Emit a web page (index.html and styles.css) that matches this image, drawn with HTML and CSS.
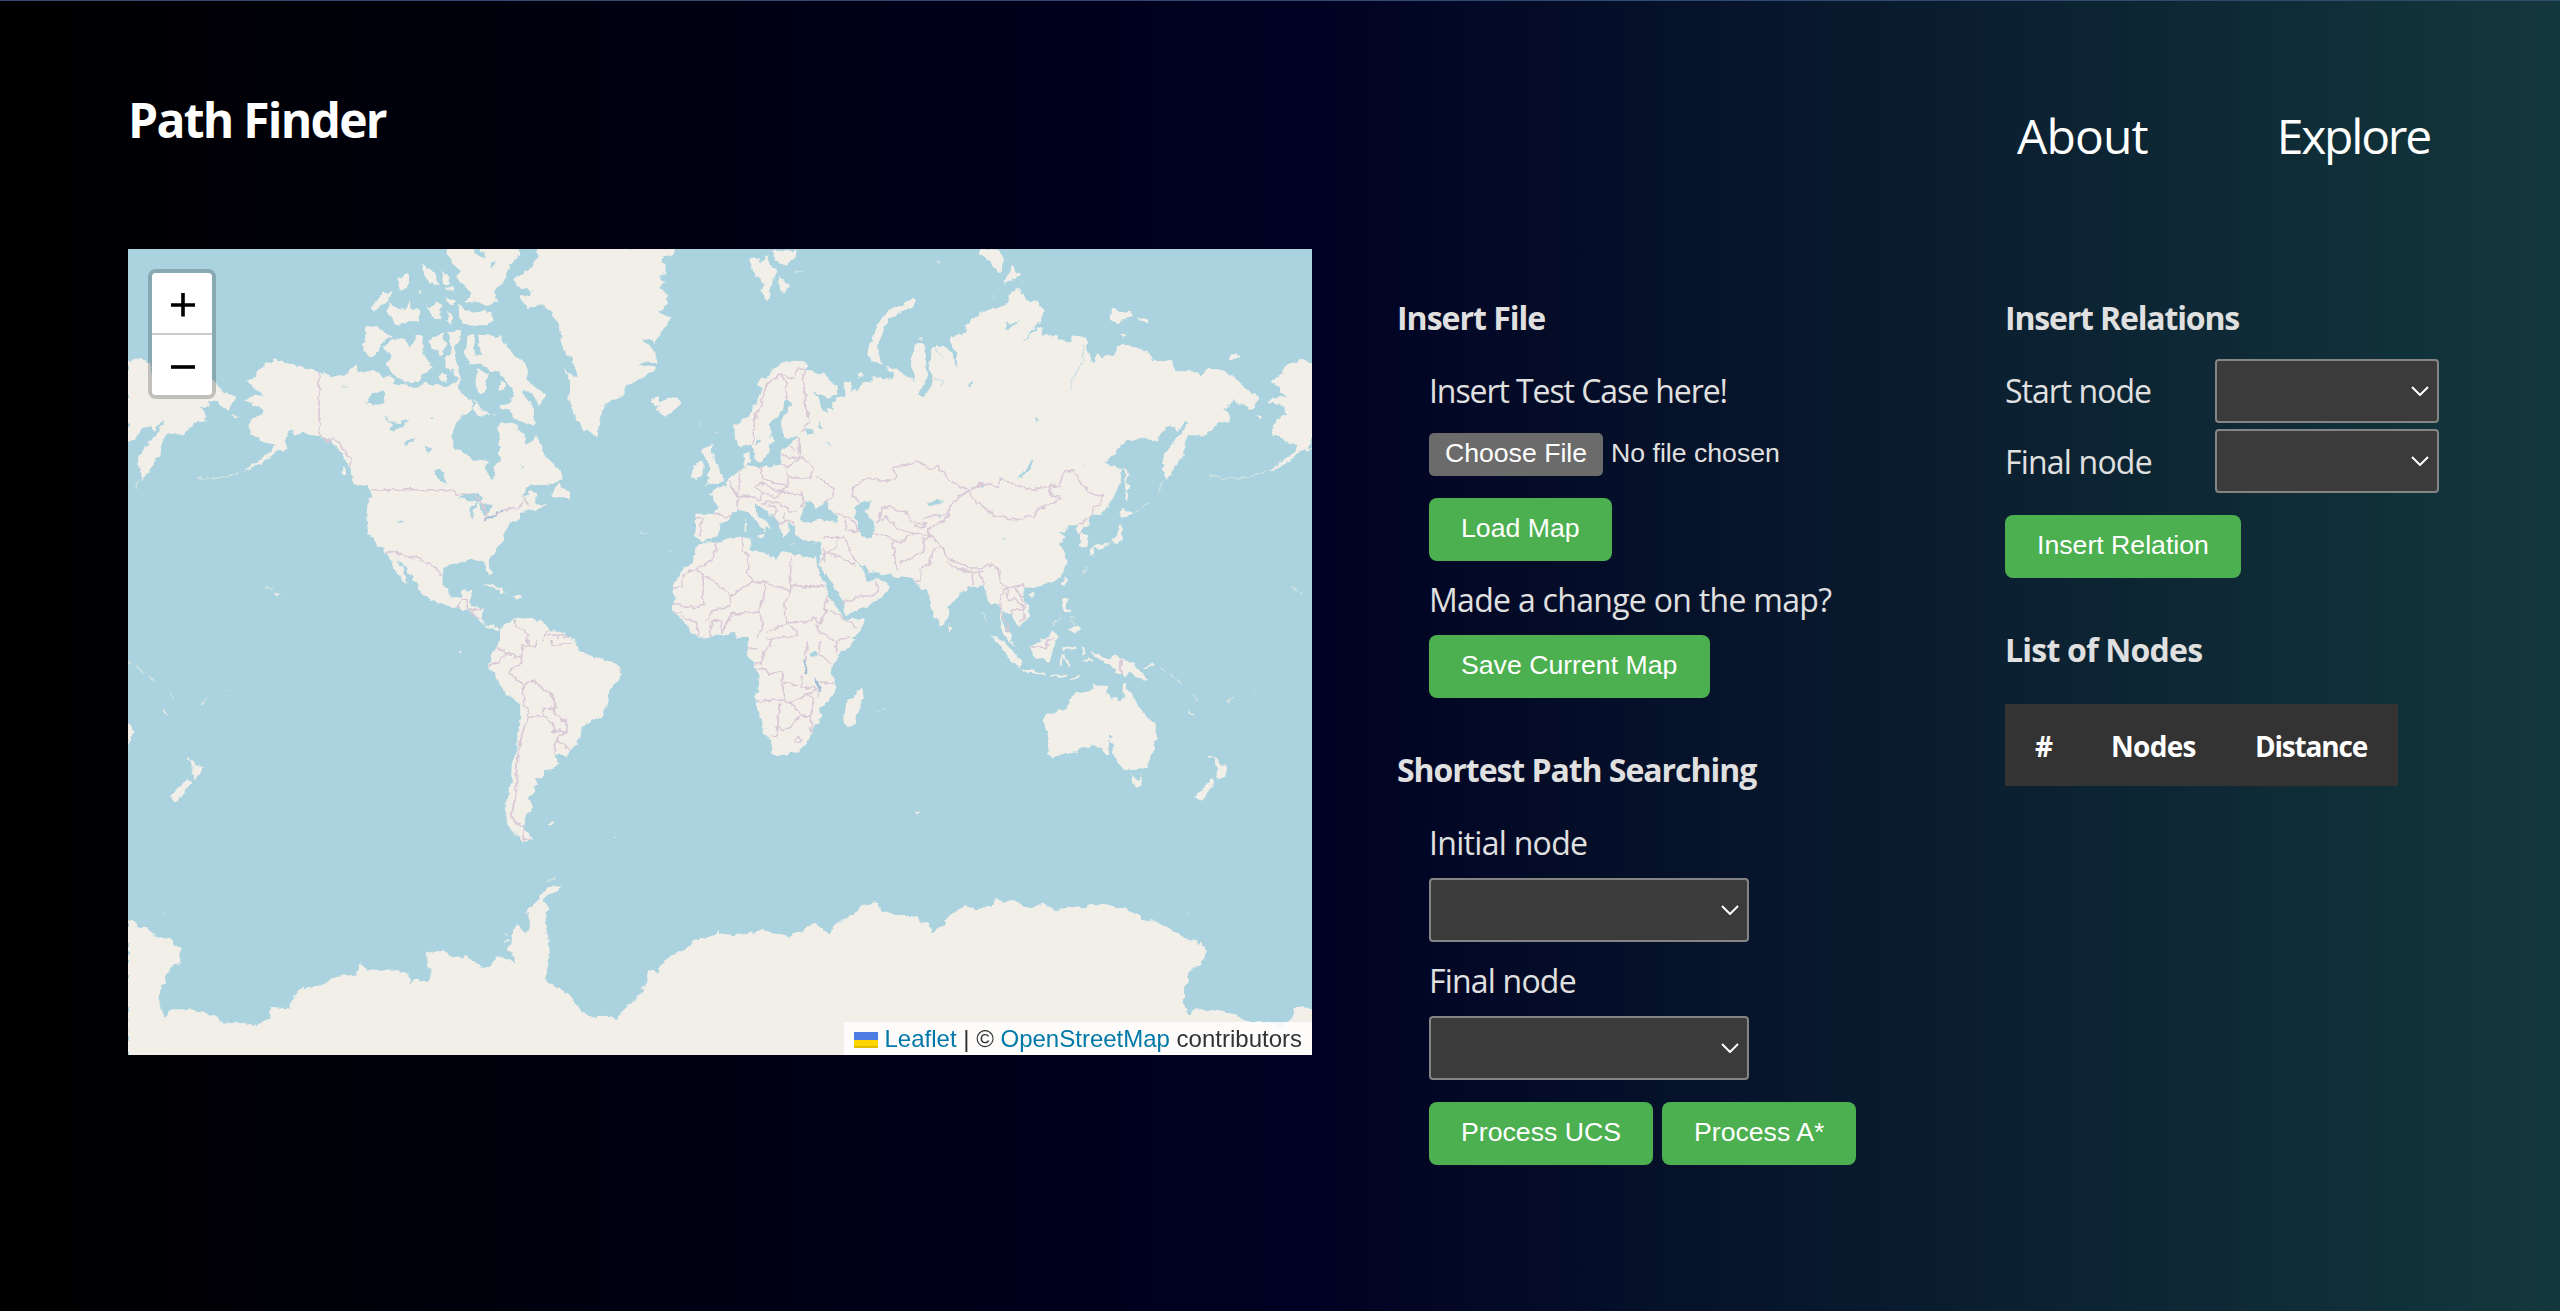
FILE: index.html
```html
<!DOCTYPE html>
<html lang="en">
<head>
<meta charset="utf-8">
<title>Path Finder</title>
<link rel="stylesheet" href="styles.css">
</head>
<body>
<header class="header">
  <h1 class="brand"><span class="t-brand">Path Finder</span></h1>
  <nav class="nav"><a class="t-about">About</a><a class="t-explore">Explore</a></nav>
</header>
<main class="main">
  <div class="map">
    <svg class="world" viewBox="128 249 1184 806">
      <!-- small noise that roughens the simplified coastlines -->
      <filter id="coast" filterUnits="userSpaceOnUse" x="120" y="240" width="1204" height="824" color-interpolation-filters="sRGB">
        <feTurbulence type="fractalNoise" baseFrequency=".14" numOctaves="2" seed="4" result="noise"/>
        <feDisplacementMap in="SourceGraphic" in2="noise" scale="6.5" xChannelSelector="R" yChannelSelector="G"/>
      </filter>
      <g filter="url(#coast)">
      <!-- North America and the North Pacific -->
      <svg x="128" y="248" width="400" height="400" viewBox="0 0 1200 1200">
        <rect class="sea" width="1200" height="1200"/>
        <path class="land" d="M0,335 50,333 66,345 69,370 134,370 149,385 164,362 209,365 255,398 285,430 325,447 305,485 290,480 270,465 243,455 245,475 215,478 230,495 236,520 210,522 158,562 140,555 110,565 95,590 98,625 85,630 78,655 60,672 45,698 35,675 33,630 55,590 85,562 108,525 105,517 75,550 70,535 42,540 20,575 0,582Z
        M357,398 385,385 392,365 415,345 430,343 440,330 475,345 515,352 560,365 573,370 612,388 650,375 686,352 690,368 715,375 735,365 765,385 800,390 795,410 830,408 860,420 890,408 925,408 955,418 985,400 1000,380 990,430 1030,455 1035,485 1000,505 980,530 968,570 975,595 990,610 1030,630 1075,643 1075,665 1090,695 1103,685 1100,655 1122,625 1118,600 1110,585 1115,560 1110,530 1140,520 1165,530 1180,560 1200,590 1200,785 1172,800 1172,815 1140,830 1125,850 1128,880 1085,925 1082,940 1093,980 1080,978 1068,938 1045,940 1030,935 1000,945 960,950 945,970 943,1010 970,1045 1000,1045 1005,1025 1035,1022 1025,1050 1030,1075 1065,1078 1060,1110 1075,1135 1100,1128 1118,1145 1105,1145 1095,1140 1080,1142 1060,1122 1030,1095 990,1080 940,1068 880,1038 875,1015 830,960 800,925 820,960 840,1005 825,1000 795,955 778,912 745,890 720,850 715,800 722,748 735,745 718,715 685,710 665,660 640,615 605,580 575,565 545,560 525,555 520,548 500,568 490,545 470,580 480,600 460,612 450,608 400,648 345,672 395,635 430,608 440,588 400,583 395,570 365,560 362,530 375,510 403,500 400,480 345,460 385,440 405,445Z
        M715,238 745,235 790,265 760,290 755,310 730,330 705,305Z M765,300 790,275 830,275 850,300 865,262 885,262 880,315 915,360 890,375 870,405 830,400 800,385 775,350 790,325Z M900,280 945,250 955,290 940,325 915,300Z M962,250 1003,247 1000,275 975,300 990,360 1000,400 960,360 953,330 970,310Z M775,190 788,168 830,190 848,155 855,185 875,190 870,215 810,235Z M728,180 765,135 790,130 780,165 735,187Z M808,92 840,78 840,120 815,125Z M878,50 915,70 935,110 905,110Z M940,68 965,90 965,110 945,105Z
        M955,0 1180,0 1165,30 1140,60 1140,85 1100,130 1110,160 1080,170 1015,160 1030,130 985,90 1000,65 965,35Z M990,170 1020,190 1090,192 1095,225 1060,235 1005,230 990,205Z M885,160 900,180 930,160 942,170 940,210 915,210Z M950,148 985,162 970,175Z M958,190 978,205 970,230 957,220Z M955,118 978,118 972,128 957,126Z M870,120 885,140 878,140Z M1158,100 1185,65 1200,60 1200,185 1190,175 1175,145 1190,125Z
        M1015,265 1035,258 1040,320 1060,320 1050,260 1080,262 1120,265 1125,290 1160,325 1200,350 1200,515 1150,490 1115,480 1145,460 1130,435 1150,420 1140,400 1150,385 1110,370 1090,375 1070,350 1040,345 1025,350 1010,325Z M1050,362 1080,380 1075,430 1055,440 1040,410Z M1040,455 1055,480 1085,500 1045,505 1035,490Z M1120,402 1132,410 1125,425Z M1090,500 1100,500 1098,508Z M940,372 958,380 950,402 935,395Z
        M1057,1015 1085,1005 1140,1033 1110,1028 1080,1012Z M1143,1045 1160,1035 1190,1045 1165,1053Z M1110,1050 1122,1050 1120,1053Z M440,1030 455,1038 447,1046Z M308,500 333,505 325,510Z M640,655 652,665 657,683 645,675Z
        M1085,1200 1115,1178 1120,1145 1150,1118 1165,1105 1170,1115 1200,1115 1200,1200Z"/>
        <path class="sea" d="M708,465 730,445 735,435 770,432 765,450 770,458 740,473 725,465Z M765,505 800,525 845,513 805,548 782,548 795,530Z M828,582 855,573 858,578 835,590Z M918,665 940,662 953,708 930,695Z M992,755 1015,738 1045,735 1062,745 1055,765 1010,752Z M1028,775 1050,765 1038,785 1035,815 1027,812Z M1055,765 1095,772 1070,805Z M905,510 917,507 912,518Z M890,595 908,605 902,620Z M808,820 823,822 818,828Z M1200,722 1175,750 1190,748 1200,740Z M1115,660 1138,663 1120,667Z M1030,0 1050,0 1075,30 1060,28Z M1085,45 1105,40 1095,60Z"/>
        <path class="lake" d="M1065,817 1095,808 1105,793 1125,790"/>
        <path class="border" d="M573,370V557L600,583 620,570 650,610 670,635 665,655 M728,725H968L985,738 1035,740 1065,765 1077,800 1068,817 M1100,800 1135,780 1165,780 1185,750H1200 M778,912 800,912 840,928 865,925 895,948 908,942 935,978H945 M985,1082 1000,1052 1018,1055 1015,1085 1035,1088 1062,1078 M1060,1110 1045,1110 1025,1090 M1165,1110 1152,1130 1165,1145 1200,1160 M1167,1038V1050"/>
        <path class="isle" d="M210,690 250,692 300,684 330,675 M640,412 655,422 M20,720 35,698 M418,1016 434,1026"/>
      </svg>
      <!-- Greenland, Europe, North Africa -->
      <svg x="500" y="248" width="400" height="400" viewBox="0 0 1200 1200">
        <rect class="sea" width="1200" height="1200"/>
        <path class="land" d="M112,0 112,30 85,65 40,95 55,120 95,125 90,145 55,145 85,180 130,172 160,195 180,240 190,310 220,330 230,385 205,375 190,350 210,400 205,445 222,495 250,550 265,545 292,567 300,510 320,465 365,445 385,405 430,390 470,360 415,350 440,340 473,348 465,310 425,275 450,270 460,285 480,262 495,235 510,212 475,195 500,170 505,140 475,118 495,105 480,85 495,70 490,25 512,20 522,0Z
        M0,0 50,0 60,20 25,50 15,100 0,115Z M0,265 40,320 55,330 85,360 80,395 137,440 120,470 85,430 65,430 105,490 103,535 50,515 30,490 0,480 0,465 30,465 45,440 0,370Z M0,520 45,530 70,560 75,590 100,580 108,560 135,620 183,665 185,690 150,710 90,712 60,750 90,730 110,735 105,760 120,770 145,768 100,793 95,785 60,795 55,815 30,825 10,860 12,880 0,892Z M155,745 178,700 185,720 207,735 207,755 190,745Z M0,402 15,405 12,425 0,425Z
        M452,450 475,445 480,460 530,445 543,468 500,503 465,490 480,475 460,470Z M752,30 775,30 780,50 800,18 815,65 832,70 818,100 803,162 778,125 795,110 755,68Z M815,10 890,5 885,35 858,55 825,35Z M838,80 850,100 865,112 855,135 840,125Z M1200,173 1180,178 1140,215 1110,290 1100,312 1115,340 1150,347 1133,315 1137,275 1165,215 1200,193Z
        M770,410 800,385 820,362 850,345 895,335 925,350 920,365 975,380 1010,415 1012,440 985,452 938,430 960,460 965,485 985,495 980,480 1000,483 1000,460 1037,440 1030,398 1055,400 1050,430 1070,430 1080,405 1110,400 1120,387 1180,395 1178,375 1158,355 1200,370 1200,987 1150,980 1130,970 1110,972 1075,940 1100,985 1105,1005 1135,990 1170,1012 1150,1045 1105,1075 1035,1102 1025,1068 990,1010 965,960 955,945 968,885 930,875 895,872 885,845 890,830 860,828 870,845 850,870 835,835 825,805 805,795 780,775 765,770 765,790 808,825 810,840 797,835 795,855 785,835 750,798 730,785 690,800 685,815 660,830 655,858 635,872 605,880 582,860 590,797 645,798 650,772 635,745 620,737 640,730 660,718 675,715 685,692 715,670 735,655 730,620 748,605 750,640 745,655 780,658 800,655 840,650 843,610 880,578 895,570 850,565 842,525 875,470 870,458 850,460 845,490 810,525 812,560 825,575 810,590 800,625 785,640 770,640 757,590 720,597 705,570 703,532 750,500 768,470 785,420Z
        M612,882 655,885 690,872 745,867 755,880 748,905 795,915 825,935 835,925 845,912 945,930 950,958 970,1000 990,1050 1030,1105 1035,1115 1097,1108 1080,1150 1030,1200 740,1200 742,1170 715,1170 700,1155 640,1165 600,1170 570,1150 545,1115 515,1085 525,1050 518,1020 545,965 578,945 585,905Z M608,605 620,590 635,585 630,610 642,615 640,635 658,655 660,680 672,685 668,700 640,705 615,712 630,690 622,680 635,665 630,650 615,635Z M573,690 580,655 600,642 612,655 605,685 585,690Z
        M770,863 795,858 788,870Z M735,825 742,825 742,848 733,848Z M735,805 741,805 740,820Z M865,887 885,887 880,890Z M935,890 950,885 945,892Z M1073,378 1085,375 1085,390 1075,388Z M0,1145 40,1108 130,1120 150,1145 210,1165 235,1200 0,1200Z M0,1020 22,1032 0,1035Z M35,1045 55,1037 70,1048 50,1052Z"/>
        <path class="sea" d="M900,815 905,790 918,762 940,765 950,780 985,757 988,770 980,785 1015,805 1010,822 965,815 905,825Z M1062,780 1085,758 1112,758 1110,775 1095,795 1125,825 1118,870 1080,865 1075,830Z M915,540 940,545 940,560 925,562Z M955,515 970,545 955,540Z M980,580 992,590 985,597Z M965,955 990,995 1030,1060 1030,1110 990,1040Z M40,1112 52,1120 50,1130Z M767,575 780,580 770,590Z M60,650 72,655 62,662Z M940,940 955,958 948,950Z"/>
        <path class="border" d="M757,590 765,500 780,480 800,405 845,380 880,390 895,360 920,362 905,385 915,430 918,490 928,520 905,550 M845,380 860,410V455 M898,570V630L845,622 M885,605 865,595 M845,652 865,655 885,640 900,630 930,645 938,668 930,690 865,690 858,655 M780,655 785,690 860,715 865,690 M950,685 1000,720 995,745 975,765 M860,715 850,735 820,725 785,705 765,715 785,735 830,745 850,735 905,738 915,760 900,780 M715,670V705L712,745 690,700 M712,745 745,745 780,755 790,735 M715,790 712,750 M780,765 825,765 845,770 870,785 890,793 M800,775 825,775 825,810 840,830 850,820 885,822 M852,790 855,820 M645,798 690,805 M590,810 605,815 600,865 M735,650 740,658 M730,870 725,905 745,925 742,975 760,1000 695,1043 590,965 640,930 650,885 M872,925V1032L795,1003 760,1000 M872,1013H970 M610,980 608,1073 555,1078 M518,1020 545,1020 550,980 585,965 M695,1043 685,1075 640,1085 615,1120 M795,1003 790,1060 775,1085 790,1130 770,1180 M872,1032 860,1055 850,1090 865,1125 895,1165 M865,1125 930,1120 940,1105 960,1125 985,1085 1030,1110 1070,1140 M950,1125 955,1150 1000,1175 1050,1170 M985,1085 970,1070 985,1050 M690,1100 775,1090 M690,1100 670,1150 M665,1115 635,1120 630,1165 M665,1115V1155 M595,1165 590,1125 545,1105 M555,1078 540,1070 520,1070 M525,1095H545 M865,1125 800,1150 M895,1165 830,1170 745,1190 M1200,655 1180,665 1190,695 1165,700 1100,690 1080,708 1060,715 1058,740 1080,765 M1135,825 1140,780 1170,775 1200,790 M1140,820 1160,805 1200,850 M1125,860 1150,858 1200,885 M1178,880 1190,970 M1005,795 1060,815 1075,850 1040,845 1035,815 M970,870 1035,868 1050,910 1070,945 M985,915 1065,948 M1015,870 1010,895 970,925 960,945 M970,905 975,945 M1025,1065 1060,1055 1080,1045 1105,1048 M1105,1048 1135,1030 1130,1000 M0,790 25,780 60,778 75,750 85,770 M40,1108 45,1135 85,1160V1200 M145,1145 130,1180 M145,1160 210,1165 M175,1165 170,1190"/>
        <path class="lake" d="M0,792 8,788"/>
        <path class="isle" d="M585,333 592,333 M600,525v5 M650,553v8 M885,75 912,66 M420,852 440,856 M510,910 515,912 M725,750"/>
      </svg>
      <!-- Asia and the Bering Sea -->
      <svg x="900" y="248" width="420" height="400" viewBox="0 0 1260 1200">
        <rect class="sea" width="1260" height="1200"/>
        <path class="land" d="M0,370 48,400 30,340 48,290 75,285 80,360 78,410 50,437 70,445 92,420 98,400 85,340 95,305 130,290 150,310 172,362 168,310 150,285 150,265 200,255 195,230 235,200 280,185 325,165 330,135 355,122 375,155 405,160 430,180 428,210 365,285 400,255 415,235 428,240 425,262 470,262 475,275 515,280 518,262 560,272 562,305 580,342 592,315 605,325 650,320 650,295 680,290 740,310 760,335 815,337 828,370 890,370 905,388 920,362 965,365 1000,385 1040,425 1080,447 1057,485 1000,455 995,475 965,478 985,490 992,520 960,525 914,562 866,562 851,590 854,625 838,635 830,655 815,675 801,698 789,670 789,630 810,590 840,562 864,525 855,520 830,550 825,533 798,540 775,572 780,580 735,572 680,577 617,645 640,655 665,660 662,700 640,750 605,800 580,800 560,830 545,845 565,870 563,893 540,895 540,860 528,835 500,835 478,855 500,868 480,888 500,930 500,945 485,985 455,1005 400,1020 375,1018 365,1045 390,1080 390,1108 360,1132 340,1115 330,1095 308,1090 305,1125 330,1160 350,1200 335,1195 300,1130 303,1080 285,1065 270,1070 250,1015 205,1018 145,1075 145,1110 122,1137 105,1110 80,1025 65,1030 40,990 0,985Z
        M462,850 500,828 510,835 480,855Z M1113,398 1141,385 1148,365 1171,345 1186,343 1196,330 1236,345 1260,350 1260,560 1245,548 1221,605 1206,608 1156,648 1101,672 1151,635 1186,608 1196,588 1156,583 1151,570 1121,560 1118,530 1131,510 1159,500 1156,480 1101,460 1141,440 1161,445Z M245,0 295,5 312,40 308,72 290,70 265,35 240,22Z M335,48 358,82 335,98 310,108Z M0,178 35,148 48,155 42,175 0,198Z M632,185 645,180 655,192 690,185 695,205 680,215 650,225 633,215Z M708,205 745,215 738,227Z M660,255 685,265 670,272Z M985,332 1000,320 1018,328 992,338Z M673,655 682,668 682,700 690,720 680,728 682,758 672,752 677,700Z M668,778 702,797 665,812 660,800Z M657,825 670,840 660,885 630,882 600,905 580,900 583,912 575,928 568,905 590,890 630,882 655,855Z M485,1005 495,985 498,1000 490,1015Z M388,1035 405,1035 395,1052Z M490,1048 503,1055 500,1080 515,1090 500,1095 485,1080Z M505,1145 535,1128 540,1150 525,1158Z M145,1125 157,1145 147,1158Z M272,1162 300,1175 330,1200 305,1200Z M390,1200 440,1170 460,1150 475,1165 465,1200Z M57,270 68,268 65,277Z M1065,500 1088,505 1080,510Z M1240,600 1220,612 1215,605Z"/>
        <path class="sea" d="M350,692 375,675 395,633 397,655 370,688Z M315,222 330,232 355,215 345,230 320,250Z M205,410 218,400 210,418Z M85,765 100,755 135,758 90,772Z M403,505 417,515 410,525Z M310,868 320,868 315,874Z M110,808 125,806 120,812Z M245,708 257,710 250,715Z M545,650 558,652 550,657Z"/>
        <path class="border" d="M0,655 55,640 95,665 115,655 145,695 205,725 245,708 295,715 300,690 345,710 395,725 450,715 475,715 495,668 520,668 550,715 585,745 610,740 600,770 580,780 575,805 525,835 M205,725 235,770 285,802 350,817 405,800 415,780 485,753 450,740 450,715 M205,725 150,775 145,810 80,845 95,865 130,900 135,925 205,960 245,960 275,948 295,960 300,1000 320,1020 370,1010 375,1020 M145,940 155,955 215,975 250,970 M215,960 220,1015 M240,975 250,1015 M95,865 70,870 75,910 0,945 M115,895 95,910 90,945 60,965 60,995 45,998 M65,820 95,800 145,805 M0,790 20,795 40,825 80,828 60,840 40,835 M0,845 35,860 60,855 95,865 M0,885 25,862 M320,1020 300,1045 305,1090 325,1150 M320,1020 325,1055 345,1050 375,1085 335,1085 335,1100 M345,1020 375,1070V1110L360,1120 M540,860 550,850 M400,1198 465,1165"/>
        <path class="isle" d="M705,795 745,765 M775,735 790,700 M930,680 970,692 1020,690 1060,684 1100,670 M460,1135 485,1100 M250,1095 260,1120 M1172,1016 1190,1026 M1200,1035 1208,1040 M510,1105 525,1110 M512,1115 525,1130 M275,145 282,150 M110,38 120,42 M370,98 378,102 M550,975 565,955"/>
        <path class="river" d="M552,290 548,345 520,385 512,425 M100,390 125,395 125,415 M105,300 130,330"/>
      </svg>
      <!-- South America and Antarctica -->
      <svg x="128" y="640" width="600" height="420" viewBox="0 0 1568 1260" preserveAspectRatio="none">
        <rect class="sea" width="1568" height="1260"/>
        <path class="land" d="M972,0 1170,0 1178,32 1220,52 1255,58 1285,80 1290,103 1258,150 1255,190 1240,230 1215,236 1188,258 1185,290 1145,348 1115,345 1125,370 1112,390 1085,393 1083,415 1062,415 1075,432 1062,438 1062,465 1045,475 1057,495 1035,535 1035,565 1060,595 1035,605 1010,585 990,545 987,490 1000,430 1003,375 1015,330 1025,250 1025,190 985,160 960,110 943,75 950,40Z M1095,550 1117,546 1110,556Z M157,350 168,360 180,378 198,382 178,422 165,400 172,385Z M155,415 165,428 130,482 108,473Z M0,245 10,260 12,290 0,330Z M188,186 195,180 198,190Z M90,208 112,228 98,222Z M865,36 875,36 870,44Z M1268,582 1280,595 1274,592Z
        M0,842 10,840 28,858 60,870 75,890 110,898 140,928 130,975 120,975 98,1000 98,1025 85,1040 82,1090 95,1130 110,1108 150,1108 225,1125 240,1142 315,1152 333,1162 370,1130 373,1100 420,1105 430,1080 445,1050 470,1038 500,1038 540,1012 597,1003 605,970 625,988 670,990 690,992 700,990 730,1000 740,1032 750,1018 790,1027 790,990 780,975 785,938 805,930 830,932 840,948 890,952 925,982 942,985 965,948 1012,967 1005,940 990,930 1003,905 1005,875 1018,853 1035,880 1050,865 1050,820 1035,822 1070,785 1075,765 1105,742 1135,735 1118,752 1085,775 1098,805 1090,850 1100,900 1102,945 1090,1018 1118,1045 1135,1050 1165,1080 1185,1112 1220,1137 1245,1125 1282,1138 1290,1115 1345,1060 1345,1040 1360,1020 1358,990 1385,998 1405,955 1455,930 1480,900 1535,885 1545,870 1568,884 1568,1260 0,1260Z M985,880 992,880 990,888Z M980,905 1000,898 1000,905Z M955,968 968,962 968,970Z"/>
        <path class="border" d="M945,72 968,70 990,38 962,22 M990,38 1028,55V70L1000,85V105L1032,128 1062,120 1070,138 1100,155 1118,190V205H1085V228L1050,228 1035,195 1032,128 M1085,228 1115,262 1112,273 1145,272 1148,258 1130,228 1115,225V205 M1145,272 1120,302 1155,332 M1120,302 1113,345 M1050,228 1038,250 1020,330 1015,400V470L1000,525 1015,552 1035,560V598L1055,595 M1028,55 1030,15 1065,20 1070,0 M1045,0V18 M1105,0 1105,18 1140,12 1160,12"/>
        <path class="isle" d="M0,65 5,75 M22,82 45,102 M55,108 75,125 M110,160 118,175 M195,185 208,172 M1095,725 1118,712 M75,800 M95,818v6 M262,150h8 M1008,575 1025,595"/>
      </svg>
      <!-- Southern Africa, Indian Ocean and Australia -->
      <svg x="720" y="640" width="600" height="420" viewBox="0 0 1568 1260" preserveAspectRatio="none">
        <rect class="sea" width="1568" height="1260"/>
        <path class="land" d="M72,0 355,0 320,35 295,75 292,105 302,125 300,165 262,205 265,235 245,255 240,290 205,335 150,348 137,343 135,310 115,280 108,225 90,185 103,130 95,85 70,45Z M368,138 375,165 350,255 330,258 322,230 332,180 350,170Z M720,0 740,0 788,70 785,82 760,60Z M752,0 762,0 773,20Z M786,88 820,92 855,100 850,104 800,98Z M810,20 840,0 878,0 870,35 860,65 820,52Z M970,38 995,40 998,55 1010,58 1030,45 1080,68 1118,122 1095,115 1075,95 1055,112 1030,100 1038,85 1005,68 990,62Z
        M845,240 850,225 905,205 912,180 935,155 965,155 975,135 1015,138 1008,160 1045,188 1052,170 1057,125 1068,150 1080,165 1090,200 1138,255 1142,290 1128,345 1115,380 1085,390 1050,385 1030,345 1023,325 1010,348 1000,325 970,318 920,335 870,352 855,345 860,320Z M1077,415 1103,415 1100,440 1088,446Z M1287,350 1298,360 1310,378 1328,382 1305,422 1295,400 1302,385Z M1285,415 1293,428 1260,482 1238,473Z M1320,186 1326,180 1330,190Z M1220,208 1242,228 1230,222Z M512,514 524,516 518,524Z
        M0,880 35,885 95,880 108,870 150,880 180,887 210,875 225,860 250,850 270,868 288,878 300,855 360,815 375,795 405,787 425,812 460,825 515,830 525,845 550,852 555,877 580,858 605,822 640,798 665,805 710,800 717,772 735,785 765,780 812,808 838,787 875,810 940,798 955,810 970,793 1010,793 1080,815 1110,842 1145,845 1190,875 1215,895 1245,900 1270,928 1258,975 1245,978 1225,1000 1228,1025 1213,1040 1212,1090 1225,1130 1240,1108 1280,1108 1355,1125 1370,1142 1445,1150 1460,1160 1500,1130 1503,1100 1550,1105 1568,1115 1568,1260 0,1260Z"/>
        <path class="thin-land" d="M895,28 928,24 M893,40 890,75 M895,40 912,78 M1105,88 1135,70 M865,106 905,108 M918,120 942,106 M948,18 954,45 M975,40 995,45 M950,62h25 M1278,350 1290,352"/>
        <path class="border" d="M95,85 120,88 130,102 160,95 165,125V180L90,182 M165,180 185,188 225,165 250,150 245,140 215,142 212,108 M185,188 210,222 235,230 243,175 225,165 M155,190 150,285 130,290 M150,255 165,272 185,258 210,232 M235,230 240,270 230,262 M90,72 110,68 115,40 135,0 M230,0 225,40 218,75 M262,0 258,40 290,72 M305,0V45 M260,130 298,128 M165,128 205,138 M205,290a8,8 0 1 0 8,8z M255,155 262,172 M72,20 100,25 M1048,58V108 M815,22 850,22 860,0"/>
        <path class="lake" d="M218,60 228,102 M250,115 262,155"/>
        <path class="sea" d="M236,38 250,32 256,40 242,52Z M1017,282h8v8h-8z M1018,300 1028,315 1022,360 1012,358Z"/>
        <path class="isle" d="M1150,82 1165,95 M1172,98 1205,128 M1240,160 1250,180 M1328,182 1338,172 M410,215h5 M428,210h4 M1392,150h6 M1225,818v6 M1070,400 1075,410 M1100,402v8"/>
      </svg>
      </g>
    </svg>
    <div class="zoom">
      <button class="zoom-btn zoom-in" aria-label="Zoom in"><svg width="24" height="24" viewBox="0 0 24 24"><path d="M12,0V23.5M0,12H24"/></svg></button>
      <button class="zoom-btn" aria-label="Zoom out"><svg width="24" height="24" viewBox="0 0 24 24"><path d="M0,12H24"/></svg></button>
    </div>
    <div class="credit"><svg class="flag" width="24" height="16" viewBox="0 0 12 8"><path fill="#4C7BE1" d="M0 0h12v4H0z"/><path fill="#FFD500" d="M0 4h12v3H0z"/><path fill="#E0BC00" d="M0 7h12v1H0z"/></svg> <a>Leaflet</a> | © <a>OpenStreetMap</a> contributors</div>
  </div>
  <section class="col files">
    <h2 class="title"><span class="t-file">Insert File</span></h2>
    <div class="indent">
      <p class="label first"><span class="t-case">Insert Test Case here!</span></p>
      <div class="file"><span class="choose">Choose File</span><span>No file chosen</span></div>
      <button class="btn">Load Map</button>
      <p class="label"><span class="t-made">Made a change on the map?</span></p>
      <button class="btn save">Save Current Map</button>
    </div>
    <h2 class="title next"><span class="t-short">Shortest Path Searching</span></h2>
    <div class="indent">
      <p class="label first"><span class="t-initial">Initial node</span></p>
      <div class="select"><svg class="chev" width="18" height="10" viewBox="0 0 18 10"><path d="M1,1 9,9 17,1"/></svg></div>
      <p class="label"><span class="t-final">Final node</span></p>
      <div class="select"><svg class="chev" width="18" height="10" viewBox="0 0 18 10"><path d="M1,1 9,9 17,1"/></svg></div>
      <div class="actions"><button class="btn">Process UCS</button><button class="btn">Process A*</button></div>
    </div>
  </section>
  <section class="col">
    <h2 class="title"><span class="t-rel">Insert Relations</span></h2>
    <div class="relations">
      <p class="label"><span class="t-start">Start node</span></p>
      <div class="select"><svg class="chev" width="18" height="10" viewBox="0 0 18 10"><path d="M1,1 9,9 17,1"/></svg></div>
      <p class="label"><span class="t-final">Final node</span></p>
      <div class="select"><svg class="chev" width="18" height="10" viewBox="0 0 18 10"><path d="M1,1 9,9 17,1"/></svg></div>
    </div>
    <button class="btn">Insert Relation</button>
    <h2 class="title next"><span class="t-list">List of Nodes</span></h2>
    <table class="nodes"><tr><th class="c-num">#</th><th class="c-node"><span class="t-nodes">Nodes</span></th><th><span class="t-dist">Distance</span></th></tr></table>
  </section>
</main>
</body>
</html>
```
FILE: styles.css
```css
* { box-sizing: border-box; }
body {
  margin: 0;
  height: 1311px;
  overflow: hidden;
  border-top: 1px solid #304a70;
  background: linear-gradient(to right, #000, #000022 50%, #13383c);
  color: #e0e0e0;
  font-family: "Open Sans", "Noto Sans", sans-serif;
}
h1, h2, p { margin: 0; }
.header {
  display: flex;
  justify-content: space-between;
  height: 248px;
  padding: 87px 130px 0 128px;
  color: #fff;
}
.brand { font-size: 48px; line-height: 64px; }
.nav { display: flex; gap: 129px; padding-top: 16px; font-size: 48px; line-height: 64px; }
.main { display: flex; padding-left: 128px; }
.map { position: relative; width: 1184px; height: 806px; overflow: hidden; background: #aad3df; }
.world { display: block; width: 1184px; height: 806px; }
.sea { fill: #aad3df; }
.land { fill: #f2efe9; }
.thin-land { fill: none; stroke: #f2efe9; stroke-width: 6; }
.border { fill: none; stroke: #d9c8d6; stroke-width: 4.5; stroke-linejoin: round; }
.lake { fill: none; stroke: #a3bfd6; stroke-width: 7; }
.river { fill: none; stroke: #cfe1e4; stroke-width: 4; }
.isle { fill: none; stroke: #cfe2e2; stroke-width: 4; }
.zoom {
  position: absolute;
  left: 20px;
  top: 20px;
  border: 4px solid rgba(0, 0, 0, .2);
  border-radius: 8px;
  background-clip: padding-box;
}
.zoom-btn {
  display: flex;
  align-items: center;
  justify-content: center;
  width: 60px;
  height: 60px;
  padding: 3px 0 0 2px;
  border: 0;
  border-radius: 0 0 4px 4px;
  background: #fff;
}
.zoom-in { height: 62px; border-bottom: 2px solid #ccc; border-radius: 4px 4px 0 0; }
.zoom-btn path { fill: none; stroke: #000; stroke-width: 3.6; }
.credit {
  position: absolute;
  right: 0;
  bottom: 0;
  height: 33px;
  padding: 0 10px;
  background: rgba(255, 255, 255, .8);
  color: #333;
  font: 24px/33px "Liberation Sans", Arial, sans-serif;
  white-space: nowrap;
}
.credit a { color: #0078a8; }
.flag { vertical-align: -1px; }
.col { padding-top: 46px; }
.files { width: 608px; margin-left: 85px; }
.title, .label { padding-top: 1px; height: 43px; font-size: 32px; line-height: 43px; }
.next { margin-top: 49px; }
.indent { padding-left: 32px; }
.label { margin-top: 16px; }
.first { margin-top: 30px; }
.file {
  display: flex;
  gap: 8px;
  margin-top: 22px;
  font: 26.67px/41px "Liberation Sans", Arial, sans-serif;
}
.choose { width: 174px; height: 43px; border-radius: 5px; background: #6b6b6b; color: #fff; text-align: center; }
.btn {
  display: block;
  height: 63px;
  margin-top: 22px;
  padding: 0 32px 3px;
  border: 0;
  border-radius: 8px;
  background: #4caf50;
  color: #fff;
  font: 26.67px/60px "Liberation Sans", Arial, sans-serif;
}
.save { margin-top: 15px; padding-right: 33px; }
.select {
  display: flex;
  align-items: center;
  justify-content: flex-end;
  width: 320px;
  height: 64px;
  margin-top: 15px;
  padding-right: 8px;
  border: 2px solid #858585;
  border-radius: 4px;
  background: #3b3b3b;
}
.chev path { fill: none; stroke: #fff; stroke-width: 2; }
.actions { display: flex; gap: 9px; }
.relations { display: grid; grid-template-columns: 210px 224px; row-gap: 6px; margin-top: 21px; }
.relations .label { margin-top: 9px; }
.relations .select { width: 224px; margin-top: 0; }
.relations .label:nth-of-type(2) { margin-top: 10px; }
.nodes {
  width: 393px;
  height: 82px;
  margin-top: 34px;
  table-layout: fixed;
  border-collapse: collapse;
  background: #333;
  color: #fff;
}
.nodes th { padding: 1px 0 0 30px; font-size: 28px; line-height: 38px; text-align: left; }
.nodes .c-num { width: 76px; }
.nodes .c-node { width: 144px; }
/* tracking per text */
.t-brand { letter-spacing: -1.75px; }
.t-about { letter-spacing: -.9px; }
.t-explore { letter-spacing: -2.2px; }
.t-file { letter-spacing: -1px; }
.t-case { letter-spacing: -1.08px; }
.t-made { letter-spacing: -.7px; }
.t-short { letter-spacing: -1.05px; }
.t-initial { letter-spacing: -.7px; }
.t-final { letter-spacing: -.8px; }
.t-rel { letter-spacing: -1.17px; }
.t-start { letter-spacing: -1px; }
.t-list { letter-spacing: -.77px; }
.t-nodes { letter-spacing: -.7px; }
.t-dist { letter-spacing: -1.2px; }
```
